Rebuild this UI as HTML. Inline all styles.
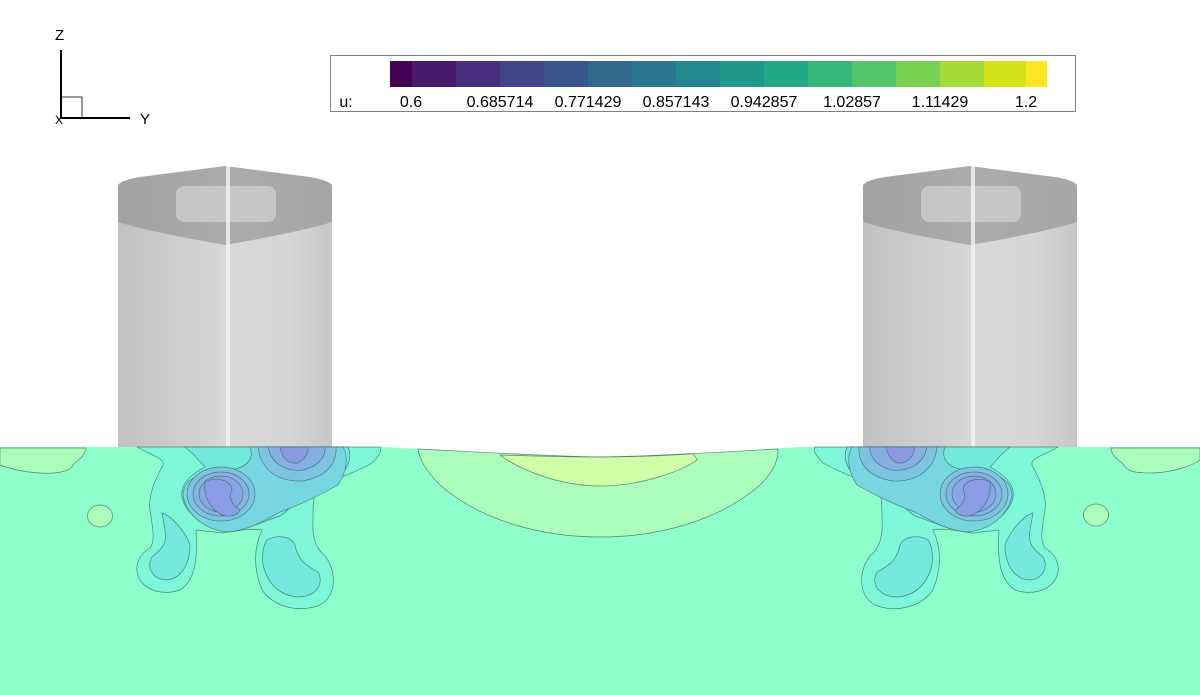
<!DOCTYPE html>
<html><head><meta charset="utf-8"><style>
html,body{margin:0;padding:0;background:#fff;}
svg{display:block;}
text{font-family:"Liberation Sans",sans-serif;}
</style></head><body>
<svg width="1200" height="695" viewBox="0 0 1200 695" xmlns="http://www.w3.org/2000/svg">
<defs>
<linearGradient id="body" x1="0" x2="1" y1="0" y2="0">
<stop offset="0" stop-color="#c2c2c2"/><stop offset="0.45" stop-color="#d4d4d4"/><stop offset="0.5" stop-color="#d8d8d8"/><stop offset="0.8" stop-color="#d6d6d6"/><stop offset="1" stop-color="#c6c6c6"/>
</linearGradient>
<linearGradient id="cap" x1="0" x2="1" y1="0" y2="0">
<stop offset="0" stop-color="#a2a2a2"/><stop offset="0.5" stop-color="#ababab"/><stop offset="1" stop-color="#a6a6a6"/>
</linearGradient>
<g id="cyl">
<rect x="118" y="200" width="214" height="250" fill="url(#body)"/>
<path d="M118,185 Q122,180 140,177 L225,166 L310,177 Q328,180 332,185 L332,222 Q300,232 225,245 Q150,232 118,222 Z" fill="url(#cap)"/>
<rect x="176" y="186" width="100" height="36" rx="8" fill="#c6c6c6"/>
<rect x="226" y="166" width="4" height="284" fill="#f4f4f4" opacity="0.8"/>
</g>
<g id="blob" stroke="#3f6a60" stroke-width="0.7" stroke-opacity="0.8">
<path fill="#7ef6d8" d="M137,447 C150,455 165,458 163,465 C155,480 148,495 150,510 C152,525 156,540 150,548 C138,555 133,568 140,580 C148,592 165,595 180,590 C195,580 198,560 196,530 L223,533 C240,530 255,528 262,530 C255,545 252,565 262,590 C275,608 300,613 320,605 C338,595 336,570 325,556 C315,548 312,535 313,520 C313,505 313,495 318,487 C340,478 360,470 372,463 C380,455 382,450 380,447 Z"/>
<path fill="#74e9de" d="M185,447 C195,455 200,462 205,467 C190,475 180,485 182,497 C185,512 200,525 225,530 C245,532 260,522 280,516 C290,510 295,500 300,495 C320,490 335,480 345,470 C352,460 350,452 348,447 Z"/>
<path fill="#74e9de" d="M162,513 C170,515 185,530 190,545 C190,565 180,580 165,580 C150,578 147,565 152,557 C160,550 168,545 165,530 Z"/>
<path fill="#74e9de" d="M267,540 C275,535 290,535 295,545 C298,560 305,565 318,572 C325,585 315,597 297,597 C280,595 268,585 263,565 C262,555 263,545 267,540 Z"/>
<path fill="#78d6e0" d="M250,447 C255,460 245,468 230,470 C200,470 183,480 183,495 C186,515 205,530 228,532 C250,530 265,520 280,512 C300,505 320,495 338,485 C348,470 348,455 343,447 Z"/>
<ellipse cx="221" cy="494" rx="34" ry="27" fill="#7fc3e2"/>
<ellipse cx="221" cy="494" rx="28" ry="22" fill="#84b4e4"/>
<ellipse cx="221" cy="494" rx="22" ry="18" fill="#88a6e6"/>
<path fill="#8a9ce6" d="M205,482 C215,476 232,480 232,490 C228,498 232,505 240,510 C238,516 228,518 220,514 C210,508 203,495 205,482 Z"/>
<path fill="#7fc3e2" d="M258,447 C260,467 275,482 302,481 C328,477 337,462 336,447 Z"/>
<path fill="#86b0e4" d="M268,447 C271,463 285,472 303,470 C320,466 326,455 325,447 Z"/>
<path fill="#8b98e2" d="M280,447 C282,458 288,464 298,463 C306,459 309,451 308,447 Z"/>
</g>
</defs>

<line x1="61" y1="50" x2="61" y2="119" stroke="#000" stroke-width="2"/>
<line x1="61" y1="118" x2="130" y2="118" stroke="#000" stroke-width="2"/>
<rect x="61" y="97" width="21" height="21" fill="none" stroke="#000" stroke-width="0.8"/>
<text x="55" y="40" font-size="15">Z</text>
<text x="140" y="124" font-size="15">Y</text>
<text x="55" y="124" font-size="12">X</text>

<rect x="330.5" y="55.5" width="745" height="56" fill="#fff" stroke="#808080" stroke-width="1"/>
<g>
<rect x="390" y="61" width="22" height="26" fill="#440154"/>
<rect x="412" y="61" width="44" height="26" fill="#481a6c"/>
<rect x="456" y="61" width="44" height="26" fill="#472f7d"/>
<rect x="500" y="61" width="44" height="26" fill="#414487"/>
<rect x="544" y="61" width="44" height="26" fill="#39568c"/>
<rect x="588" y="61" width="44" height="26" fill="#31688e"/>
<rect x="632" y="61" width="44" height="26" fill="#2a788e"/>
<rect x="676" y="61" width="44" height="26" fill="#23888e"/>
<rect x="720" y="61" width="44" height="26" fill="#1f988b"/>
<rect x="764" y="61" width="44" height="26" fill="#22a884"/>
<rect x="808" y="61" width="44" height="26" fill="#35b779"/>
<rect x="852" y="61" width="44" height="26" fill="#54c568"/>
<rect x="896" y="61" width="44" height="26" fill="#7ad151"/>
<rect x="940" y="61" width="44" height="26" fill="#a5db36"/>
<rect x="984" y="61" width="42" height="26" fill="#d2e21b"/>
<rect x="1026" y="61" width="21" height="26" fill="#fde725"/>
</g>
<g font-size="16" fill="#000" text-anchor="middle">
<text x="346" y="107">u:</text>
<text x="411" y="107">0.6</text>
<text x="500" y="107">0.685714</text>
<text x="588" y="107">0.771429</text>
<text x="676" y="107">0.857143</text>
<text x="764" y="107">0.942857</text>
<text x="852" y="107">1.02857</text>
<text x="940" y="107">1.11429</text>
<text x="1026" y="107">1.2</text>
</g>

<use href="#cyl"/>
<use href="#cyl" transform="translate(745,0)"/>

<path fill="#8efecc" d="M0,447 L380,447 C420,449 480,452 520,456 C570,458 630,458 680,456 C720,452 770,449 800,447 L1200,447 L1200,695 L0,695 Z"/>
<g stroke="#3f6a60" stroke-width="0.7" stroke-opacity="0.8">
<path fill="#acfdbb" d="M418,449 C420,460 425,470 440,485 C480,520 540,537 600,537 C660,537 720,520 760,485 C775,470 778,460 778,449 C720,452 660,456 600,457 C540,456 480,452 418,449 Z"/>
<path fill="#d0fda8" d="M500,455 C520,470 560,486 600,486 C640,486 680,472 697,460 C695,455 692,453 690,454 C660,456 630,457 600,457 C560,457 530,456 500,455 Z"/>
<path fill="#acfdbb" d="M0,448 L86,448 C85,456 78,460 73,465 C70,472 55,474 40,473 C20,472 8,468 0,465 Z"/>
<path fill="#acfdbb" d="M1111,448 L1200,448 L1200,460 C1190,467 1170,473 1150,473 C1130,473 1127,470 1122,463 C1114,457 1111,453 1111,448 Z"/>
<ellipse cx="100" cy="516" rx="12.5" ry="11" fill="#acfdbb"/>
<ellipse cx="1096" cy="515" rx="12.5" ry="11" fill="#acfdbb"/>
</g>
<use href="#blob"/>
<use href="#blob" transform="translate(1195,0) scale(-1,1)"/>
</svg>
</body></html>
